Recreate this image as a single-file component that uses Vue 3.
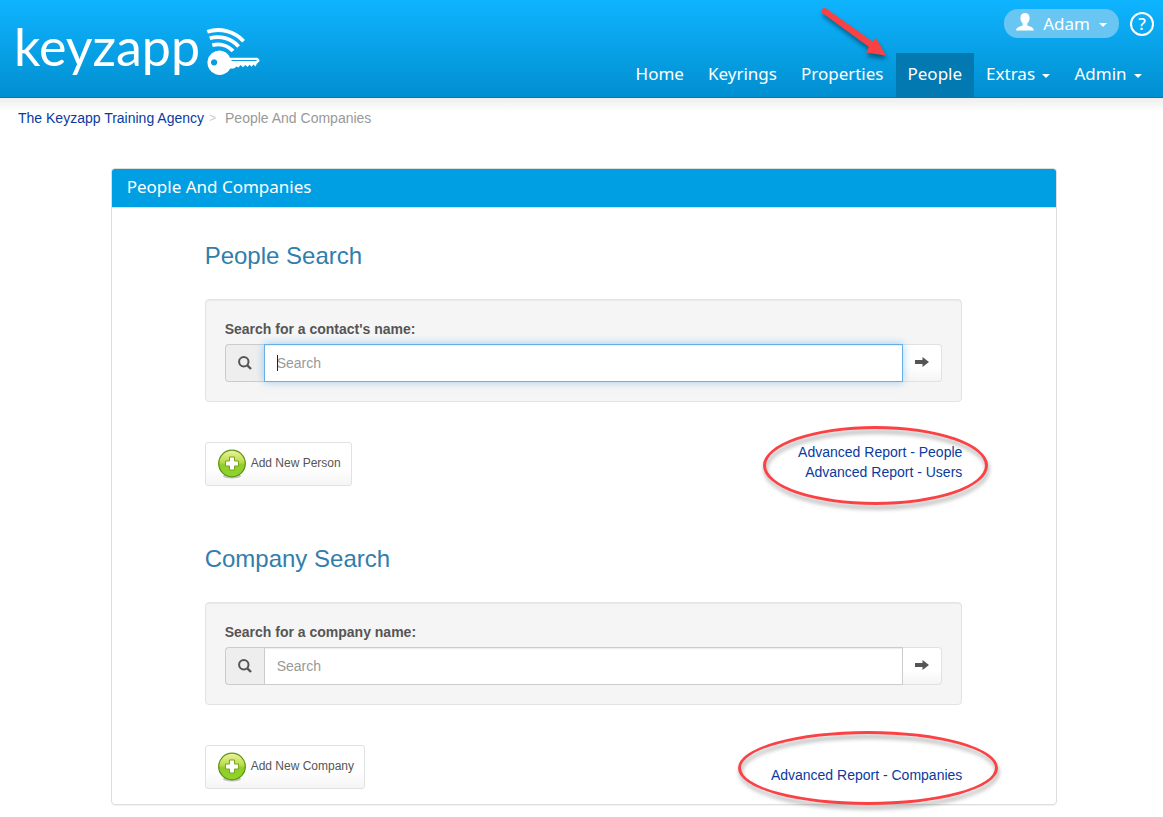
<script setup>
import { ref } from 'vue'

const navItems = [
  { label: 'Home' },
  { label: 'Keyrings' },
  { label: 'Properties' },
  { label: 'People', active: true },
  { label: 'Extras', menu: true },
  { label: 'Admin', menu: true },
]

const sections = ref([
  {
    id: 'people',
    title: 'People Search',
    prompt: "Search for a contact's name:",
    action: 'Add New Person',
    reports: ['Advanced Report - People', 'Advanced Report - Users'],
    focused: true,
    query: '',
  },
  {
    id: 'company',
    title: 'Company Search',
    prompt: 'Search for a company name:',
    action: 'Add New Company',
    reports: ['Advanced Report - Companies'],
    focused: false,
    query: '',
  },
])
</script>

<template>
  <div class="page">
    <header class="topbar">
      <a class="logo" href="#" aria-label="keyzapp">
        <span class="logo-text">keyzapp</span>
        <svg class="logo-key" viewBox="0 0 56 52" aria-hidden="true">
          <g fill="none" stroke="#fff" stroke-width="3.8">
            <path d="M3.3 6.7A35 35 0 0 1 39.6 16.2" />
            <path d="M5.7 13.3A28 28 0 0 1 34.6 21.5" />
            <path d="M8.3 20.3A20.5 20.5 0 0 1 29 26" />
          </g>
          <path
            fill="#fff"
            fill-rule="evenodd"
            d="M15.700 25.500A12.200 12.200 0 0 1 26 32.700H53.500L55.300 34.500V36.500L53 38.500L51.500 41.500L49.500 39.500L47.500 41.800L45.500 39.800L43.500 42L41.500 40L39 42.200L36.500 40L34.500 42.500L32.500 41.500L30 43.500H26.400A12.200 12.200 0 1 1 15.700 25.500ZM10.100 34.300a3.100 3.100 0 1 0 .01 0Z"
          />
          <path d="M27.500 35.500H52.500" stroke="#069bdc" stroke-width="1" />
        </svg>
      </a>

      <div class="topbar-right">
        <div class="account">
          <button class="user" type="button">
            <svg class="user-icon" viewBox="0 0 18 18" aria-hidden="true">
              <path
                fill="#fff"
                d="M9 0C6.300 0 4.400 2 4.400 4.700C4.400 7.400 5.500 9.300 6.700 10.500V12.200C5.200 13.400 .4 13.500 0 17.500H18C17.600 13.500 12.800 13.400 11.300 12.200V10.500C12.500 9.300 13.600 7.400 13.600 4.700C13.600 2 11.700 0 9 0Z"
              />
            </svg>
            <span>Adam</span>
            <i class="caret"></i>
          </button>
          <a class="help" href="#" aria-label="Help">?</a>
        </div>
        <nav class="nav">
          <a
            v-for="item in navItems"
            :key="item.label"
            href="#"
            class="nav-item"
            :class="{ active: item.active }"
          >
            {{ item.label }}
            <i v-if="item.menu" class="caret"></i>
            <svg v-if="item.active" class="pointer" viewBox="0 0 82 66" aria-hidden="true">
              <path
                fill="#fa4245"
                d="M12.200 8.500L58.500 41.500L62 38L72 55.500L52 52.500L55 47L9 13.500A2.900 2.900 0 0 1 12.200 8.500Z"
              />
            </svg>
          </a>
        </nav>
      </div>
    </header>

    <nav class="breadcrumb" aria-label="Breadcrumb">
      <a href="#">The Keyzapp Training Agency</a>
      <span class="separator">&gt;</span>
      <span>People And Companies</span>
    </nav>

    <main class="layout">
      <div class="panel">
        <h1 class="panel-title">People And Companies</h1>
        <div class="panel-body">
          <section v-for="s in sections" :key="s.id">
            <h2>{{ s.title }}</h2>
            <form class="well" @submit.prevent>
              <label :for="s.id">{{ s.prompt }}</label>
              <div class="search">
                <span class="addon">
                  <svg viewBox="0 0 14 14" aria-hidden="true">
                    <circle cx="5.800" cy="5.800" r="4.700" fill="none" stroke="#555" stroke-width="2" />
                    <path d="M9.300 9.300L13 13" stroke="#555" stroke-width="2.400" />
                  </svg>
                </span>
                <div class="field" :class="{ focused: s.focused }">
                  <input :id="s.id" v-model="s.query" type="text" placeholder="Search" />
                  <span v-if="s.focused" class="cursor"></span>
                </div>
                <button class="go" type="submit" aria-label="Go">
                  <svg viewBox="0 0 14 12" aria-hidden="true">
                    <path fill="#555" d="M0 3H7.500V0L14 5L7.500 10V7H0Z" />
                  </svg>
                </button>
              </div>
            </form>
            <div class="actions">
              <button class="add" type="button">
                <svg viewBox="0 0 28 30" aria-hidden="true">
                  <defs>
                    <linearGradient :id="s.id + '-green'" x1="0" y1="0" x2="0" y2="1">
                      <stop offset="0" stop-color="#eef3a0" />
                      <stop offset=".45" stop-color="#b9dc4a" />
                      <stop offset=".55" stop-color="#93cb2c" />
                      <stop offset="1" stop-color="#8ed629" />
                    </linearGradient>
                  </defs>
                  <ellipse cx="14" cy="27" rx="9" ry="2.500" fill="#000" opacity=".22" />
                  <circle
                    cx="14"
                    cy="14.500"
                    r="13.300"
                    :fill="`url(#${s.id}-green)`"
                    stroke="#5f9614"
                    stroke-width="1.300"
                  />
                  <path
                    d="M11.500 8H16.500V12H20.500V17H16.500V21H11.500V17H7.500V12H11.500Z"
                    fill="#fff"
                    stroke="#75a51e"
                    stroke-width="1"
                  />
                </svg>
                <span>{{ s.action }}</span>
              </button>
              <div class="reports" :class="s.id">
                <a v-for="r in s.reports" :key="r" href="#">{{ r }}</a>
                <span class="ring"></span>
              </div>
            </div>
          </section>
        </div>
      </div>
    </main>
  </div>
</template>

<style>
body {
  margin: 0;
  background: #fff;
}
</style>

<style scoped>
* {
  box-sizing: border-box;
}

.page {
  font: 14px/20px 'Liberation Sans', Arial, sans-serif;
  color: #555;
}

a {
  color: #0a3aa0;
  text-decoration: none;
}

button,
input {
  font: inherit;
  color: inherit;
}

.topbar {
  display: flex;
  justify-content: space-between;
  align-items: flex-start;
  padding: 9px 9px 0 14px;
  border-bottom: 1px solid #0276ae;
  background: linear-gradient(#0fb4ff, #018fd0);
}

.logo {
  display: flex;
  gap: 4px;
  padding-top: 16px;
  color: #fff;
}

.logo-text {
  font: 52px/42px Lato, sans-serif;
}

.logo-key {
  width: 56px;
  height: 52px;
}

.topbar-right {
  display: flex;
  flex-direction: column;
  align-items: flex-end;
  gap: 15px;
  font: 17px/20px 'Noto Sans', sans-serif;
  color: #fff;
}

.account {
  display: flex;
  align-items: center;
  gap: 11px;
}

.user {
  display: flex;
  align-items: center;
  height: 29px;
  padding: 0 12px;
  border: 0;
  border-radius: 14px;
  background: #69c5f1;
}

.user-icon {
  width: 18px;
  height: 18px;
  margin: 0 9px 4px 0;
}

.help {
  width: 24px;
  height: 24px;
  border: 2px solid #fff;
  border-radius: 50%;
  color: #fff;
  font-weight: 500;
  text-align: center;
}

.caret {
  display: inline-block;
  border: 4px solid transparent;
  border-top-color: #fff;
  border-bottom: 0;
  vertical-align: 2px;
}

.user .caret {
  margin: 3px 0 0 9px;
}

.nav {
  display: flex;
}

.nav-item {
  position: relative;
  padding: 11px 12px 13px;
  color: #fff;
  white-space: nowrap;
}

.nav-item .caret {
  margin-left: 3px;
}

.nav-item.active {
  background: #0279b0;
}

.pointer {
  position: absolute;
  top: -53px;
  left: -82px;
  width: 82px;
  height: 66px;
  filter: drop-shadow(1px 4px 2px rgba(0, 0, 0, 0.4));
  pointer-events: none;
}

.breadcrumb {
  display: flex;
  padding: 10px 18px 40px;
  background: linear-gradient(#eee, #fff 14px);
  color: #999;
}

.separator {
  padding: 0 9px 0 5px;
  color: #ccc;
  font-size: 12px;
}

.layout {
  display: grid;
  grid-template-columns: 1fr 10fr 1fr;
  padding: 0 11px 12px 16px;
}

.panel {
  grid-column: 2;
  border: 1px solid #ddd;
  border-radius: 4px;
  box-shadow: 0 1px 1px rgba(0, 0, 0, 0.05);
}

.panel-title {
  margin: 0;
  padding: 8px 15px 10px;
  border-bottom: 1px solid #ddd;
  border-radius: 3px 3px 0 0;
  background: #009fe3;
  font: 17px/20px 'Noto Sans', sans-serif;
  color: #fff;
}

.panel-body {
  display: flex;
  flex-direction: column;
  gap: 60px;
  padding: 35px 94px 15px 93px;
}

h2 {
  margin: 0 0 30px;
  font-size: 24px;
  font-weight: 400;
  line-height: 26px;
  color: #317eac;
}

.well {
  padding: 19px;
  border: 1px solid #e3e3e3;
  border-radius: 4px;
  background: #f5f5f5;
  box-shadow: inset 0 1px 1px rgba(0, 0, 0, 0.05);
}

label {
  display: block;
  margin-bottom: 5px;
  font-weight: 700;
}

.search {
  display: flex;
  height: 38px;
}

.addon {
  display: grid;
  place-items: center;
  width: 39px;
  border: 1px solid #ccc;
  border-right: 0;
  border-radius: 4px 0 0 4px;
  background: #eee;
}

.addon svg {
  width: 14px;
  height: 14px;
}

.field {
  position: relative;
  display: flex;
  flex: 1;
}

.field input {
  width: 100%;
  padding: 0 12px;
  border: 1px solid #ccc;
  border-radius: 0;
  outline: 0;
  background: #fff;
  box-shadow: inset 0 1px 1px rgba(0, 0, 0, 0.075);
}

.field input::placeholder {
  color: #999;
  opacity: 1;
}

.field.focused {
  z-index: 1;
}

.field.focused input,
.field input:focus {
  border-color: #66afe9;
  box-shadow:
    inset 0 1px 1px rgba(0, 0, 0, 0.075),
    0 0 8px rgba(102, 175, 233, 0.6);
}

.cursor {
  position: absolute;
  top: 11px;
  left: 13px;
  width: 1px;
  height: 16px;
  background: #222;
}

.go {
  display: grid;
  place-items: center;
  width: 39px;
  padding: 0;
  border: 1px solid #e1e1e1;
  border-left: 0;
  border-radius: 0 4px 4px 0;
  background: linear-gradient(#fff, #fff 60%, #f5f5f5);
}

.go svg {
  width: 14px;
  height: 12px;
}

.actions {
  display: flex;
  justify-content: space-between;
  align-items: flex-start;
  margin-top: 40px;
}

.add {
  display: flex;
  align-items: center;
  gap: 5px;
  height: 44px;
  padding: 0 10px 0 12px;
  border: 1px solid #e1e1e1;
  border-radius: 3px;
  background: linear-gradient(#fff, #fff 60%, #f5f5f5);
  font-size: 12px;
}

.add svg {
  width: 28px;
  height: 30px;
}

.add span {
  padding-bottom: 2px;
}

.reports {
  position: relative;
  display: flex;
  flex-direction: column;
  align-items: flex-end;
}

.reports.company {
  padding-top: 20px;
}

.ring {
  position: absolute;
  top: -16px;
  right: -26px;
  width: 225px;
  height: 79px;
  border: 3px solid #fa4245;
  border-radius: 50%;
  filter: drop-shadow(1px 4px 2px rgba(0, 0, 0, 0.35));
  pointer-events: none;
}

.company .ring {
  top: -14px;
  right: -36px;
  width: 260px;
  height: 74px;
}
</style>
